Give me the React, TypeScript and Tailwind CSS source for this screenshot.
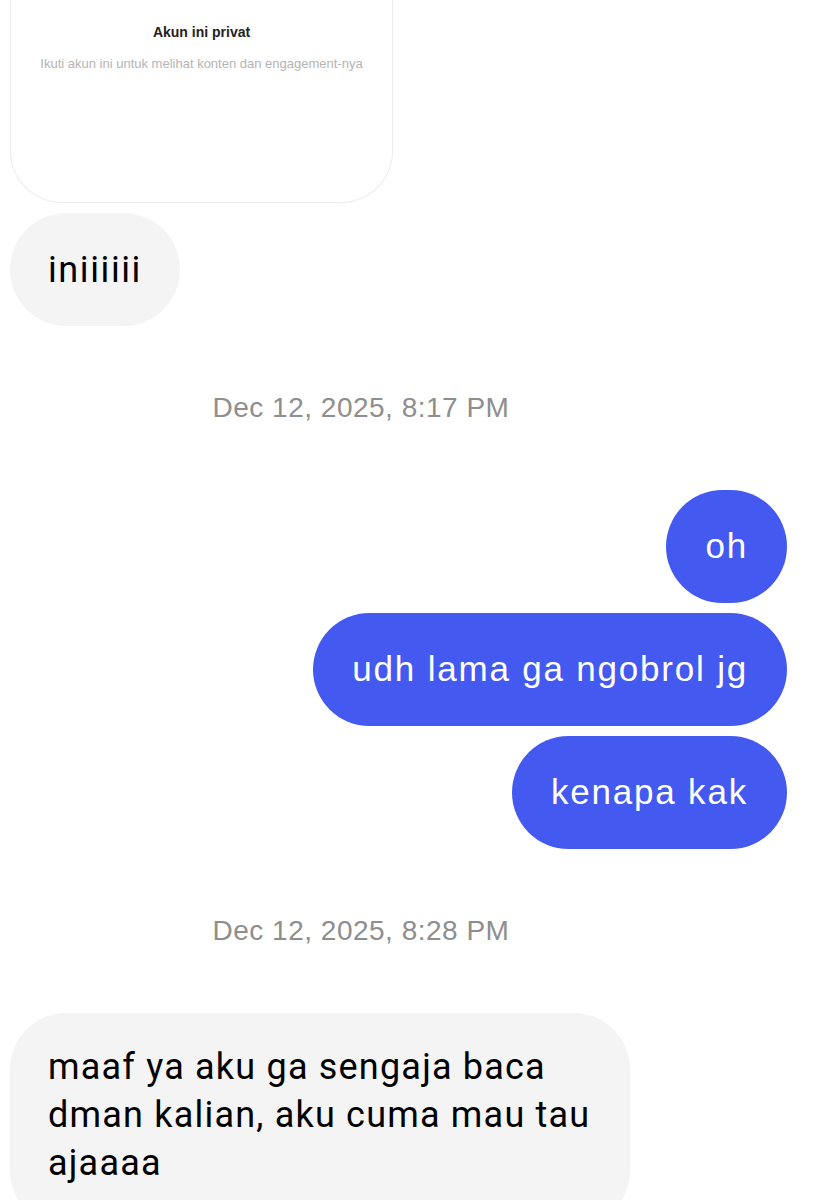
const leftFont = { fontFamily: "Roboto, 'Noto Sans', sans-serif" };

function Stamp({ text }: { text: string }) {
  return (
    <div className="flex h-[164px] items-center justify-center pr-[94px]">
      <span className="font-['Liberation_Sans',Arial,sans-serif] text-[28px] tracking-[0.5px] text-[#8e8e8e]">
        {text}
      </span>
    </div>
  );
}

function Mine({ text }: { text: string }) {
  return (
    <div className="flex justify-end pr-[29px]">
      <div className="flex h-[113px] items-center rounded-full bg-[#4359f0] px-[39px] font-['Liberation_Sans',Arial,sans-serif] text-[35px] tracking-[1.8px] text-white">
        {text}
      </div>
    </div>
  );
}

export default function App() {
  return (
    <div className="h-[1200px] overflow-hidden bg-white">
      {/* shared post preview */}
      <div className="ml-[10px] flex h-[203px] w-[383px] flex-col items-center rounded-b-[52px] border border-t-0 border-[#ececec] pt-[22px] font-['Liberation_Sans',Arial,sans-serif]">
        <div className="text-[14px] font-bold text-[#222]">Akun ini privat</div>
        <div className="mt-[11px] text-[13px] text-[#b4b4b4]">
          Ikuti akun ini untuk melihat konten dan engagement-nya
        </div>
      </div>

      <div className="mt-[10px] flex pl-[10px]">
        <div
          className="flex h-[113px] items-center rounded-full bg-[#f4f4f4] px-[38px] text-[36px] tracking-[1.6px] text-black"
          style={leftFont}
        >
          iniiiiii
        </div>
      </div>

      <Stamp text="Dec 12, 2025, 8:17 PM" />

      <div className="flex flex-col gap-[10px]">
        <Mine text="oh" />
        <Mine text="udh lama ga ngobrol jg" />
        <Mine text="kenapa kak" />
      </div>

      <Stamp text="Dec 12, 2025, 8:28 PM" />

      <div className="pl-[10px]">
        <div
          className="w-[620px] whitespace-nowrap rounded-[56px] bg-[#f4f4f4] pb-[40px] pl-[38px] pr-[30px] pt-[30px] text-[36px] leading-[48px] tracking-[1.2px] text-black"
          style={leftFont}
        >
          <div>maaf ya aku ga sengaja baca</div>
          <div>dman kalian, aku cuma mau tau</div>
          <div>ajaaaa</div>
        </div>
      </div>
    </div>
  );
}
